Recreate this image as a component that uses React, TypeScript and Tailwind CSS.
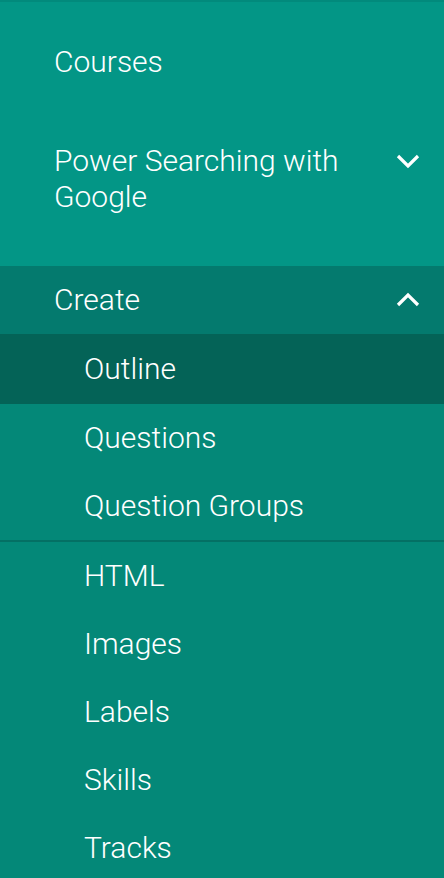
const font = { fontFamily: "Roboto, 'Liberation Sans', sans-serif" };

const Chevron = ({ up }: { up?: boolean }) => (
    <svg width="24" height="16" viewBox="0 0 24 16" className="shrink-0">
        <polyline
            points={up ? "2,13 12,3 22,13" : "2,3 12,13 22,3"}
            fill="none"
            stroke="white"
            strokeWidth="3.2"
        />
    </svg>
);

const subItems = ["Questions", "Question Groups"];
const moreItems = ["HTML", "Images", "Labels", "Skills", "Tracks"];

const SubItem = ({ label }: { label: string }) => (
    <div className="h-[68px] flex items-center pl-[84px] pb-[2px] text-[30px] font-light text-white">
        {label}
    </div>
);

export default function App() {
    return (
        <div
            className="w-[444px] h-[878px] overflow-hidden bg-[#048878]"
            style={font}
        >
            <div className="bg-[#039686] border-t-2 border-[#028a7c]">
                <div className="h-[122px] flex items-center pl-[54px] pb-[4px] text-[30px] font-light text-white">
                    Courses
                </div>
                <div className="flex items-start justify-between pl-[54px] pr-[24px] pt-[19px] pb-[51px]">
                    <div className="text-[30px] font-light leading-[36px] text-white w-[300px]">
                        Power Searching with Google
                    </div>
                    <div className="pt-[10px]">
                        <Chevron />
                    </div>
                </div>
            </div>
            <div className="h-[68px] flex items-center justify-between bg-[#047a6e] pl-[54px] pr-[24px] text-[30px] font-light text-white">
                <span className="pb-[2px]">Create</span>
                <Chevron up />
            </div>
            <div className="h-[70px] flex items-center pl-[84px] pb-[2px] bg-[#046357] text-[30px] font-light text-white">
                Outline
            </div>
            {subItems.map((s) => (
                <SubItem key={s} label={s} />
            ))}
            <div className="h-[2px] bg-[#047064]" />
            {moreItems.map((s) => (
                <SubItem key={s} label={s} />
            ))}
        </div>
    );
}
